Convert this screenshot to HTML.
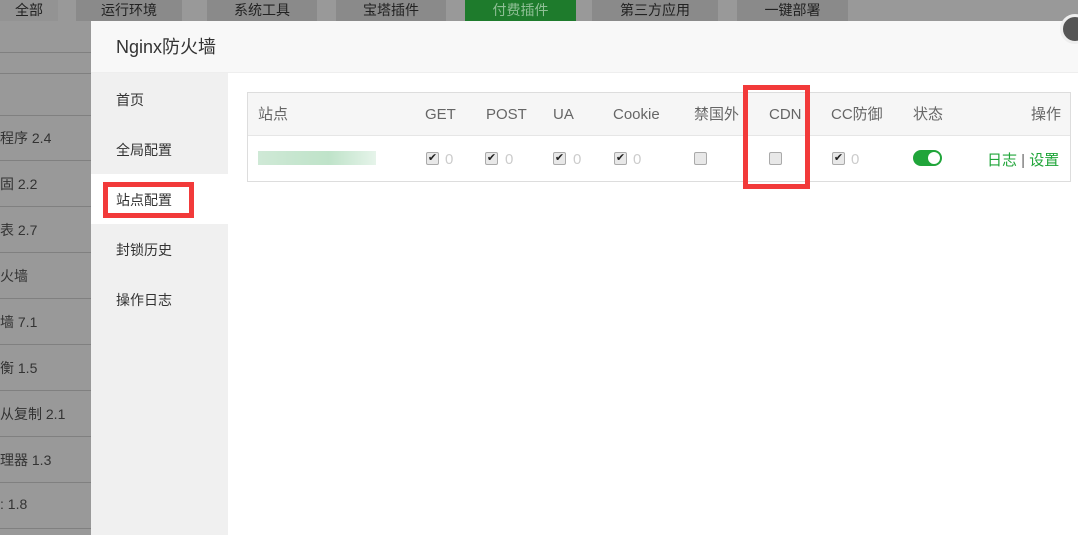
<!DOCTYPE html>
<html><head><meta charset="utf-8"><style>
*{margin:0;padding:0;box-sizing:border-box}
html,body{width:1078px;height:535px;overflow:hidden}
body{background:#999;font-family:"Liberation Sans","Noto Sans CJK SC",sans-serif;position:relative;color:#333}
.tab{position:absolute;top:0;height:21px;background:#8a8a8a;color:#222;font-size:14px;line-height:20px;text-align:center}
.row{position:absolute;left:0;width:91px;height:1px;background:#808080}
.lt{position:absolute;left:0;font-size:14px;color:#333;white-space:nowrap}
.dlg{position:absolute;left:91px;top:21px;width:987px;height:514px;background:#fff;overflow:hidden}
.hd{height:52px;background:#f8f8f8;border-bottom:1px solid #eee;font-size:18px;line-height:52px;padding-left:25px;color:#333}
.side{position:absolute;left:0;top:52px;width:137px;height:462px;background:#f0f0f0}
.si{position:absolute;left:25px;font-size:14px;color:#333}
.tbl{position:absolute;left:156px;top:71px;width:824px;height:90px;border:1px solid #ddd}
.th{height:43px;background:#f6f6f6;border-bottom:1px solid #e6e6e6;position:relative}
.th span{position:absolute;font-size:15px;color:#666;top:0;line-height:43px}
.td span{position:absolute;font-size:15px;color:#666;top:14px}
.td{position:relative;height:46px}
.cb{position:absolute;top:16px;width:13px;height:13px;border:1px solid #aaa;border-radius:2px;background:#e8e8e8;font-size:11px;line-height:11px;text-align:center;color:#222}
.z{position:absolute;top:15px;font-size:15px;color:#ccc}
</style></head><body>
<div class="tab" style="left:0;width:58px;background:#939393">全部</div>
<div class="tab" style="left:76px;width:106px">运行环境</div>
<div class="tab" style="left:207px;width:110px">系统工具</div>
<div class="tab" style="left:336px;width:110px">宝塔插件</div>
<div class="tab" style="left:465px;width:111px;background:#1e7b2c;color:#8fbf95">付费插件</div>
<div class="tab" style="left:592px;width:126px">第三方应用</div>
<div class="tab" style="left:737px;width:111px">一键部署</div>
<div class="row" style="top:52px"></div><div class="row" style="top:73px"></div>
<div class="row" style="top:115px"></div><div class="row" style="top:160px"></div>
<div class="row" style="top:206px"></div><div class="row" style="top:252px"></div>
<div class="row" style="top:298px"></div><div class="row" style="top:344px"></div>
<div class="row" style="top:390px"></div><div class="row" style="top:436px"></div>
<div class="row" style="top:482px"></div><div class="row" style="top:528px"></div>
<div class="lt" style="top:128px">程序 2.4</div>
<div class="lt" style="top:174px">固 2.2</div>
<div class="lt" style="top:220px">表 2.7</div>
<div class="lt" style="top:266px">火墙</div>
<div class="lt" style="top:312px">墙 7.1</div>
<div class="lt" style="top:358px">衡 1.5</div>
<div class="lt" style="top:404px">从复制 2.1</div>
<div class="lt" style="top:450px">理器 1.3</div>
<div class="lt" style="top:496px">: 1.8</div>
<div class="dlg">
<div class="hd">Nginx防火墙</div>
<div class="side">
<div class="si" style="top:17px">首页</div>
<div class="si" style="top:67px">全局配置</div>
<div style="position:absolute;left:0;top:101px;width:137px;height:50px;background:#fff"></div>
<div style="position:absolute;left:12px;top:109px;width:91px;height:36px;border:5px solid #f23a3a"></div>
<div class="si" style="top:117px">站点配置</div>
<div class="si" style="top:167px">封锁历史</div>
<div class="si" style="top:217px">操作日志</div>
</div>
<div class="tbl">
<div class="th">
<span style="left:10px">站点</span><span style="left:177px">GET</span><span style="left:238px">POST</span><span style="left:305px">UA</span><span style="left:365px">Cookie</span><span style="left:446px">禁国外</span><span style="left:521px">CDN</span><span style="left:583px">CC防御</span><span style="left:665px">状态</span><span style="left:783px">操作</span>
</div>
<div class="td">
<div style="position:absolute;left:10px;top:15px;width:118px;height:14px;background:linear-gradient(90deg,#cfe9d6,#bfe3c9 60%,#e6f4ea)"></div>
<div class="cb" style="left:178px">✔</div><div class="z" style="left:197px">0</div>
<div class="cb" style="left:237px">✔</div><div class="z" style="left:257px">0</div>
<div class="cb" style="left:305px">✔</div><div class="z" style="left:325px">0</div>
<div class="cb" style="left:366px">✔</div><div class="z" style="left:385px">0</div>
<div class="cb" style="left:446px"></div>
<div class="cb" style="left:521px"></div>
<div class="cb" style="left:584px">✔</div><div class="z" style="left:603px">0</div>
<div style="position:absolute;left:665px;top:14px;width:29px;height:16px;border-radius:8px;background:#20a53a"><div style="position:absolute;right:2px;top:2px;width:12px;height:12px;border-radius:50%;background:#fff"></div></div>
<span style="left:739px;top:13px;color:#20a53a">日志 <span style="position:static;color:#666">|</span> 设置</span>
</div>
</div>
<div style="position:absolute;left:652px;top:64px;width:67px;height:104px;border:5px solid #f23a3a"></div>
</div>
<div style="position:absolute;left:1060px;top:14px;width:30px;height:30px;border-radius:50%;background:#555;border:3px solid #eee"></div>
</body></html>
